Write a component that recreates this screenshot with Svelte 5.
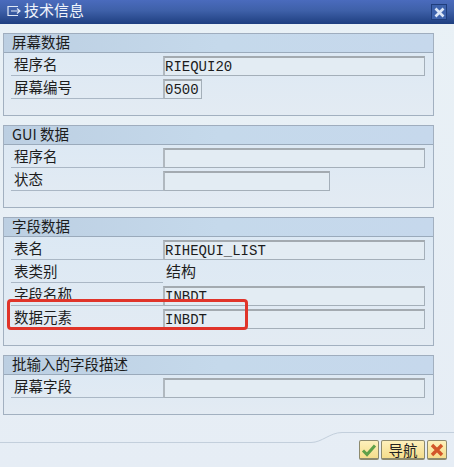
<script>
  const panels = [
    { title: '屏幕数据', rows: [
      { label: '程序名', value: 'RIEQUI20', w: 'full' },
      { label: '屏幕编号', value: '0500', w: 'tiny' }
    ]},
    { title: 'GUI 数据', rows: [
      { label: '程序名', value: '', w: 'full' },
      { label: '状态', value: '', w: 'mid' }
    ]},
    { title: '字段数据', rows: [
      { label: '表名', value: 'RIHEQUI_LIST', w: 'full' },
      { label: '表类别', value: '结构', w: 'plain' },
      { label: '字段名称', value: 'INBDT', w: 'full' },
      { label: '数据元素', value: 'INBDT', w: 'full' }
    ]},
    { title: '批输入的字段描述', rows: [
      { label: '屏幕字段', value: '', w: 'full' }
    ]}
  ];
</script>

<div class="win">
  <header class="title">
    <svg class="ticon" width="18" height="14" viewBox="0 0 18 14" fill="none" stroke="#dfe8f6" stroke-width="1.2">
      <path d="M13 2.5H3v9h10" />
      <path d="M6 7h9M12 4.5 15 7l-3 2.5" />
    </svg>
    <span class="ttext">技术信息</span>
    <span class="close">
      <svg width="11" height="11" viewBox="0 0 11 11"><path d="M1.5 1.5l8 8M9.5 1.5l-8 8" stroke="#dbe6f7" stroke-width="2.6"/></svg>
    </span>
  </header>

  <main class="body">
    {#each panels as p}
      <section class="panel">
        <h2 class="phead">{p.title}</h2>
        <div class="rows">
          {#each p.rows as r}
            <div class="row">
              <span class="label">{r.label}</span>
              {#if r.w === 'plain'}
                <span class="plain">{r.value}</span>
              {:else}
                <span class="field {r.w}">{r.value}</span>
              {/if}
            </div>
          {/each}
        </div>
      </section>
    {/each}
  </main>

  <footer class="foot">
    <svg class="curve" width="454" height="20" viewBox="0 0 454 20" fill="none"><path d="M0 12.5H311C322 12.5 330 2.5 342 2.5H454" stroke="#c3cfdc"/></svg>
    <div class="btns">
      <button class="btn sq" aria-label="确定">
        <svg width="16" height="14" viewBox="0 0 16 14"><path d="M2 7.5l4 4 8-9" fill="none" stroke="#5fa049" stroke-width="3"/></svg>
      </button>
      <button class="btn nav">导航</button>
      <button class="btn sq" aria-label="取消">
        <svg width="14" height="14" viewBox="0 0 14 14"><path d="M2 2l10 10M12 2L2 12" stroke="#d2562a" stroke-width="3.4"/></svg>
      </button>
    </div>
  </footer>

  <div class="mark"></div>
</div>

<style>
  :global(body) { margin: 0; background: #eaf1f7; }
  .win {
    position: relative;
    width: 454px;
    height: 467px;
    overflow: hidden;
    font-family: "Noto Sans CJK SC", "Liberation Sans", sans-serif;
    color: #1c1c1c;
    background: linear-gradient(#e9f1f6, #e6edf5);
  }
  .title {
    height: 24px;
    display: flex;
    align-items: center;
    padding-left: 5px;
    background: linear-gradient(#4a6bbd 0%, #3e60a8 45%, #1e3f80 100%);
    color: #f0f4fb;
  }
  .ticon { flex: none; margin-top: -2px; }
  .ttext { margin-left: 1px; font-size: 15px; line-height: 20px; margin-top: -5px; }
  .close {
    margin-left: auto;
    margin-right: 7px;
    width: 14px;
    height: 14px;
    display: flex;
    align-items: center;
    justify-content: center;
    background: #3d62ac;
    border: 1px solid #1f3d7c;
  }
  .body {
    padding: 9px 20px 0 3px;
    display: flex;
    flex-direction: column;
    gap: 9px;
  }
  .panel {
    border: 1px solid #a2b0c0;
    border-top-color: #9fadbe;
    background: linear-gradient(#dbe8f4, #e3ebf3);
    display: flex;
    flex-direction: column;
  }
  .phead {
    margin: 0;
    height: 18px;
    line-height: 15px;
    padding-left: 8px;
    font-size: 14.5px;
    font-weight: 400;
    background: linear-gradient(90deg, #bccfe2, #c5d9eb 50%, #c6d8ec);
    border-bottom: 1px solid #9aaabb;
  }
  .rows {
    padding: 3px 8px 16px 7px;
    display: flex;
    flex-direction: column;
    gap: 3px;
  }
  .row {
    position: relative;
    height: 20px;
    display: flex;
    align-items: center;
  }
  .row::after {
    content: "";
    position: absolute;
    left: 0;
    width: 152px;
    bottom: 0;
    height: 1px;
    background: #aab7c5;
  }
  .label {
    box-sizing: border-box;
    width: 152px;
    padding-left: 3px;
    font-size: 14.5px;
    line-height: 20px;
    margin-top: -4px;
    flex: none;
  }
  .field, .plain {
    font-family: "Liberation Mono", monospace;
    font-size: 14px;
    box-sizing: border-box;
  }
  .field {
    height: 20px;
    border: 1px solid #a4afb9;
    border-top: 2px solid #a3aab0;
    border-left: 2px solid #b0b8bf;
    background: #e3ecf3;
    line-height: 19px;
  }
  .full { width: 263px; }
  .mid { width: 167px; }
  .tiny { width: 39px; }
  .plain {
    font-family: "Noto Sans CJK SC", sans-serif;
    padding-left: 3px;
    font-size: 15px;
    line-height: 20px;
    margin-top: -4px;
  }
  .foot {
    position: absolute;
    left: 0;
    right: 0;
    bottom: 0;
    height: 47px;
    display: flex;
    justify-content: flex-end;
    align-items: flex-end;
  }
  .curve { position: absolute; left: 0; top: 10px; }
  .btns {
    position: relative;
    display: flex;
    gap: 2px;
    padding: 0 7px 7px 0;
  }
  .btn {
    margin: 0;
    padding: 0;
    height: 20px;
    display: flex;
    align-items: center;
    justify-content: center;
    box-sizing: border-box;
    border: 1px solid #8d8a6e;
    border-radius: 2px;
    border-bottom-width: 2px;
    background: linear-gradient(#fdf0bb, #f5dd8c);
    font-family: "Noto Sans CJK SC", sans-serif;
    font-size: 14.5px;
    color: #222;
  }
  .sq { width: 20px; }
  .nav { width: 44px; }
  .mark {
    position: absolute;
    left: 7px;
    top: 299px;
    width: 241px;
    height: 31px;
    box-sizing: border-box;
    border: 3px solid #e0342a;
    border-radius: 4px;
    pointer-events: none;
  }
</style>
